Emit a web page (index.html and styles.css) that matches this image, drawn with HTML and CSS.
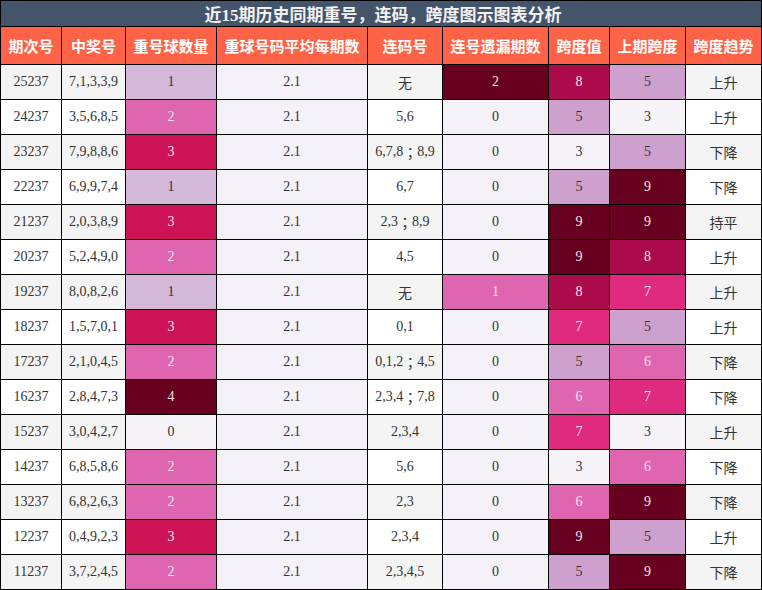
FILE: index.html
```html
<!DOCTYPE html>
<html lang="zh">
<head>
<meta charset="utf-8">
<title>近15期历史同期重号，连码，跨度图示图表分析</title>
<link rel="stylesheet" href="styles.css">
</head>
<body>
<div class="sheet">
  <div class="title">近15期历史同期重号，连码，跨度图示图表分析</div>

  <div class="th">期次号</div><div class="th">中奖号</div><div class="th">重号球数量</div><div class="th">重球号码平均每期数</div><div class="th">连码号</div><div class="th">连号遗漏期数</div><div class="th">跨度值</div><div class="th">上期跨度</div><div class="th">跨度趋势</div>

  <div class="td g">25237</div><div class="td g">7,1,3,3,9</div><div class="td k1">1</div><div class="td lav">2.1</div><div class="td g cjk">无</div><div class="td k9 lt">2</div><div class="td k8 lt">8</div><div class="td k5">5</div><div class="td g cjk">上升</div>

  <div class="td">24237</div><div class="td">3,5,6,8,5</div><div class="td k6 lt">2</div><div class="td lav">2.1</div><div class="td">5,6</div><div class="td lav">0</div><div class="td k5">5</div><div class="td k3">3</div><div class="td cjk">上升</div>

  <div class="td g">23237</div><div class="td g">7,9,8,8,6</div><div class="td kr lt">3</div><div class="td lav">2.1</div><div class="td g">6,7,8<span class="semi">；</span>8,9</div><div class="td lav">0</div><div class="td k3">3</div><div class="td k5">5</div><div class="td g cjk">下降</div>

  <div class="td">22237</div><div class="td">6,9,9,7,4</div><div class="td k1">1</div><div class="td lav">2.1</div><div class="td">6,7</div><div class="td lav">0</div><div class="td k5">5</div><div class="td k9 lt">9</div><div class="td cjk">下降</div>

  <div class="td g">21237</div><div class="td g">2,0,3,8,9</div><div class="td kr lt">3</div><div class="td lav">2.1</div><div class="td g">2,3<span class="semi">；</span>8,9</div><div class="td lav">0</div><div class="td k9 lt">9</div><div class="td k9 lt">9</div><div class="td g cjk">持平</div>

  <div class="td">20237</div><div class="td">5,2,4,9,0</div><div class="td k6 lt">2</div><div class="td lav">2.1</div><div class="td">4,5</div><div class="td lav">0</div><div class="td k9 lt">9</div><div class="td k8 lt">8</div><div class="td cjk">上升</div>

  <div class="td g">19237</div><div class="td g">8,0,8,2,6</div><div class="td k1">1</div><div class="td lav">2.1</div><div class="td g cjk">无</div><div class="td k6 lt">1</div><div class="td k8 lt">8</div><div class="td k7 lt">7</div><div class="td g cjk">上升</div>

  <div class="td">18237</div><div class="td">1,5,7,0,1</div><div class="td kr lt">3</div><div class="td lav">2.1</div><div class="td">0,1</div><div class="td lav">0</div><div class="td k7 lt">7</div><div class="td k5">5</div><div class="td cjk">上升</div>

  <div class="td g">17237</div><div class="td g">2,1,0,4,5</div><div class="td k6 lt">2</div><div class="td lav">2.1</div><div class="td g">0,1,2<span class="semi">；</span>4,5</div><div class="td lav">0</div><div class="td k5">5</div><div class="td k6 lt">6</div><div class="td g cjk">下降</div>

  <div class="td">16237</div><div class="td">2,8,4,7,3</div><div class="td k9 lt">4</div><div class="td lav">2.1</div><div class="td">2,3,4<span class="semi">；</span>7,8</div><div class="td lav">0</div><div class="td k6 lt">6</div><div class="td k7 lt">7</div><div class="td cjk">下降</div>

  <div class="td g">15237</div><div class="td g">3,0,4,2,7</div><div class="td k3">0</div><div class="td lav">2.1</div><div class="td g">2,3,4</div><div class="td lav">0</div><div class="td k7 lt">7</div><div class="td k3">3</div><div class="td g cjk">上升</div>

  <div class="td">14237</div><div class="td">6,8,5,8,6</div><div class="td k6 lt">2</div><div class="td lav">2.1</div><div class="td">5,6</div><div class="td lav">0</div><div class="td k3">3</div><div class="td k6 lt">6</div><div class="td cjk">下降</div>

  <div class="td g">13237</div><div class="td g">6,8,2,6,3</div><div class="td k6 lt">2</div><div class="td lav">2.1</div><div class="td g">2,3</div><div class="td lav">0</div><div class="td k6 lt">6</div><div class="td k9 lt">9</div><div class="td g cjk">下降</div>

  <div class="td">12237</div><div class="td">0,4,9,2,3</div><div class="td kr lt">3</div><div class="td lav">2.1</div><div class="td">2,3,4</div><div class="td lav">0</div><div class="td k9 lt">9</div><div class="td k5">5</div><div class="td cjk">上升</div>

  <div class="td g">11237</div><div class="td g">3,7,2,4,5</div><div class="td k6 lt">2</div><div class="td lav">2.1</div><div class="td g">2,3,4,5</div><div class="td lav">0</div><div class="td k5">5</div><div class="td k9 lt">9</div><div class="td g cjk">下降</div>
</div>
</body>
</html>
```

FILE: styles.css
```css
html, body {
  margin: 0;
  padding: 0;
  background: #ffffff;
}

.sheet {
  width: 762px;
  box-sizing: border-box;
  display: grid;
  grid-template-columns: 60px 63px 90px 150px 74px 105px 60px 75px 75px;
  grid-template-rows: 25px 37px repeat(15, 34px);
  gap: 1px;
  padding: 1px;
  background: #000000;
  font-family: "Liberation Serif", "Noto Sans CJK SC", serif;
}

.title {
  grid-column: 1 / -1;
  background: #44546a;
  color: #f2f2f2;
  font-family: "Liberation Serif", "Noto Sans CJK SC", sans-serif;
  font-weight: bold;
  font-size: 17px;
  display: flex;
  align-items: center;
  justify-content: center;
  padding-left: 4px;
}

.th {
  background: #ff6347;
  color: #ffffff;
  font-family: "Noto Sans CJK SC", sans-serif;
  font-weight: bold;
  font-size: 15px;
  display: flex;
  align-items: center;
  justify-content: center;
  white-space: nowrap;
}

.td {
  background: #ffffff;
  color: #333333;
  font-size: 14px;
  display: flex;
  align-items: center;
  justify-content: center;
  white-space: nowrap;
}

.cjk {
  font-family: "Noto Sans CJK SC", sans-serif;
}

.semi {
  font-family: "Noto Sans CJK TC", sans-serif;
}

.td.g { background: #f4f4f4; }
.td.lav { background: #f4f2f8; }

.td.k3 { background: #f7f4f9; }
.td.k1 { background: #d4b9da; }
.td.k5 { background: #cea0cd; }
.td.k6 { background: #df65b0; }
.td.k7 { background: #df2a80; }
.td.kr { background: #ce1256; }
.td.k8 { background: #ab0a4b; }
.td.k9 { background: #67001f; }

.td.lt { color: #f4e4ee; }
```
